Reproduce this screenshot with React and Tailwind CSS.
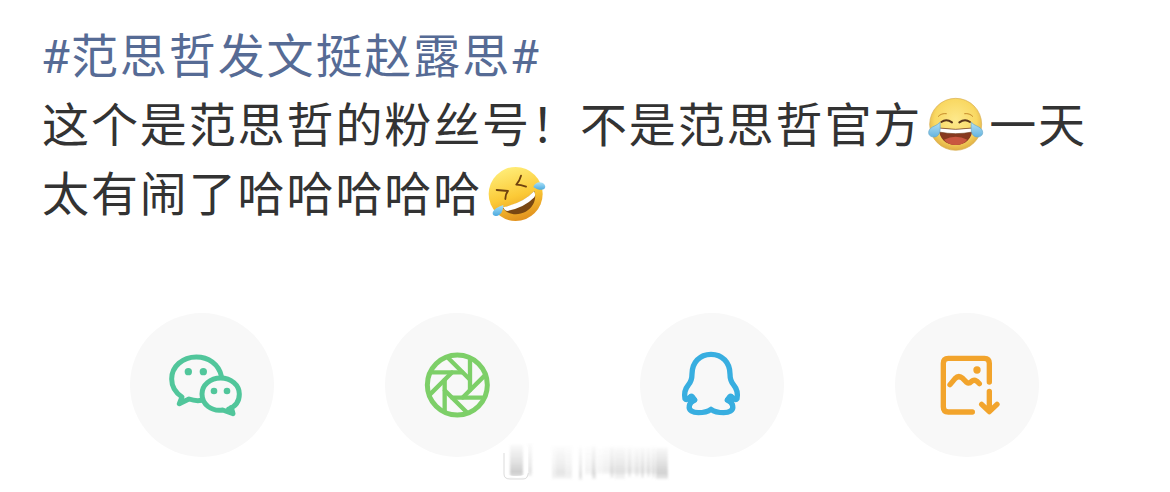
const JoyEmoji = () => (
  <svg viewBox="24 18 168 168" className="ml-[6px] mr-[5px] -mt-[2px] h-14 w-14 shrink-0" role="img">
    <defs>
      <radialGradient id="joyFace" cx="50%" cy="42%" r="58%">
        <stop offset="0" stopColor="#fde98c" />
        <stop offset="0.7" stopColor="#f9d862" />
        <stop offset="1" stopColor="#dfad43" />
      </radialGradient>
      <linearGradient id="joyTear" x1="0" y1="0" x2="0" y2="1">
        <stop offset="0" stopColor="#b4e0f3" />
        <stop offset="1" stopColor="#65b4df" />
      </linearGradient>
    </defs>
    <circle cx="107" cy="100" r="78" fill="url(#joyFace)" stroke="#d8ae50" strokeWidth="2" />
    <path d="M55 76Q64 66 79 68M134 68Q149 66 158 76" fill="none" stroke="#c58a2a" strokeWidth="3" strokeLinecap="round" />
    <path d="M64 93Q79 82 96 94M118 94Q135 82 150 93" fill="none" stroke="#5b371c" strokeWidth="6" strokeLinecap="round" />
    <path d="M57 111Q107 118 157 111C158 143 136 162 107 162S56 143 57 111Z" fill="#87391f" />
    <path d="M72 146Q107 128 142 146Q130 162 107 162T72 146Z" fill="#c95740" />
    <path d="M57 111Q107 119 157 111V123Q107 133 57 123Z" fill="#fff" stroke="#70401f" strokeWidth="2" />
    <path d="M60 94C61 112 63 136 43 138C25 139 21 122 32 112C39 105 51 104 60 94Z" fill="url(#joyTear)" stroke="#67a8c9" strokeWidth="2" />
    <path d="M154 94C153 112 151 136 171 138C189 139 193 122 182 112C175 105 163 104 154 94Z" fill="url(#joyTear)" stroke="#67a8c9" strokeWidth="2" />
  </svg>
);

const RoflEmoji = () => (
  <svg viewBox="24 18 174 174" className="ml-[6px] h-[58px] w-[58px] shrink-0" role="img">
    <defs>
      <linearGradient id="roflFace" x1="0.3" y1="0" x2="0.6" y2="1">
        <stop offset="0" stopColor="#ffee7a" />
        <stop offset="0.55" stopColor="#fbc936" />
        <stop offset="1" stopColor="#e08f1d" />
      </linearGradient>
      <linearGradient id="roflTear" x1="0" y1="0" x2="0" y2="1">
        <stop offset="0" stopColor="#a9e1f8" />
        <stop offset="1" stopColor="#4ba9df" />
      </linearGradient>
    </defs>
    <circle cx="107" cy="102" r="81" fill="url(#roflFace)" />
    <path d="M50 90L84 93Q77 101 76 117M123 47Q119 62 109 74Q122 74 138 80" fill="none" stroke="#70420f" strokeWidth="5.5" strokeLinejoin="round" strokeLinecap="round" />
    <path d="M68 143Q130 130 163 93C171 117 160 143 137 155C112 168 82 164 68 143Z" fill="#794713" />
    <path d="M69 142Q130 129 162 94Q168 104 163 112Q132 144 81 153Q73 151 69 142Z" fill="#fff" />
    <path d="M70 135C70 153 61 169 47 168C30 166 36 145 70 135Z" fill="url(#roflTear)" />
    <path d="M160 81C166 65 184 63 194 74C202 90 181 96 160 81Z" fill="url(#roflTear)" />
  </svg>
);

const WechatIcon = () => (
  <g stroke="#51c69b" strokeWidth="15">
    <path d="M289 213C281 177 250 156 214 156C173 156 140 184 140 222C140 246 153 264 171 276L163 296L192 282Q211 289 230 286" />
    <path d="M311 312C333 304 343 286 343 267C343 240 318 219 287 219S231 240 231 267C231 299 260 320 293 315L324 326L319 307" />
    <g fill="#51c69b" stroke="none">
      <circle cx="190" cy="200" r="11" />
      <circle cx="235" cy="200" r="11" />
      <circle cx="267" cy="258" r="10" />
      <circle cx="306" cy="258" r="10" />
    </g>
  </g>
);

const blades = [0, 45, 90, 135, 180, 225, 270, 315];

const MomentsIcon = () => (
  <g stroke="#7dcf68" strokeWidth="15">
    <circle cx="232" cy="240" r="90" />
    {blades.map((angle) => (
      <path key={angle} d="M152 202H247" strokeWidth="13" transform={`rotate(${angle} 232 240)`} />
    ))}
  </g>
);

const QQIcon = () => (
  <g stroke="#38aee0" strokeWidth="16">
    <path d="M228 148C194 148 171 173 171 207C171 223 168 231 160 240C150 252 147 266 150 281Q155 288 167 275L179 285Q165 291 163 302C160 317 174 323 190 323C207 323 217 321 228 313C239 321 249 323 266 323C282 323 296 317 293 302Q291 291 277 285L289 275Q301 288 306 281C309 266 306 252 296 240C288 231 285 223 285 207C285 173 262 148 228 148Z" />
    <path d="M170 276L176 284M286 276L280 284" strokeWidth="20" />
  </g>
);

const SaveImageIcon = () => (
  <g stroke="#f2a42c" strokeWidth="16">
    <path d="M298 231V175Q298 160 283 160H175Q160 160 160 175V306Q160 321 175 321H247" />
    <path d="M180 239L195 221Q206 209 218 220L230 232Q237 237 245 229Q255 220 268 236" />
    <circle cx="261" cy="195" r="11" fill="#f2a42c" stroke="none" />
    <path d="M298 259V318M275 298L298 320L321 298" />
    <path d="M289 309H307L298 319Z" strokeWidth="6" fill="#f2a42c" />
  </g>
);

const shareTargets = [
  { id: 'wechat', Icon: WechatIcon },
  { id: 'moments', Icon: MomentsIcon },
  { id: 'qq', Icon: QQIcon },
  { id: 'save', Icon: SaveImageIcon },
];

// [x, width, top, height, opacity]
const streaks = [
  [20, 13, 2, 32, 0.65], [38, 4, 0, 33, 0.35],
  [62, 20, 3, 33, 0.22], [66, 9, 4, 30, 0.15], [89, 3, 4, 33, 0.4],
  [95, 9, 4, 28, 0.16], [102, 4, 3, 33, 0.42], [107, 6, 5, 26, 0.15],
  [113, 64, 4, 27, 0.22], [120, 4, 3, 32, 0.3], [125, 10, 4, 32, 0.25],
  [138, 3, 4, 30, 0.3], [145, 4, 5, 29, 0.2], [151, 3, 5, 30, 0.35],
  [157, 3, 5, 29, 0.3], [162, 3, 4, 31, 0.3], [166, 12, 5, 31, 0.5],
];

const Watermark = () => (
  <svg viewBox="0 0 190 45" className="absolute left-[490px] top-[443px] h-[45px] w-[190px]">
    <defs>
      <linearGradient id="streak" x1="0" y1="0" x2="0" y2="1">
        <stop offset="0" stopColor="#aaa" stopOpacity="0.1" />
        <stop offset="0.5" stopColor="#aaa" stopOpacity="0.5" />
        <stop offset="0.85" stopColor="#999" stopOpacity="0.75" />
        <stop offset="1" stopColor="#999" stopOpacity="0.4" />
      </linearGradient>
      <filter id="soften">
        <feGaussianBlur stdDeviation="0.9" />
      </filter>
    </defs>
    <rect x="10" y="0" width="168" height="38" fill="#fff" filter="url(#soften)" />
    <g filter="url(#soften)" fill="url(#streak)">
      {streaks.map(([x, width, y, height, opacity]) => (
        <rect key={x} x={x} y={y} width={width} height={height} opacity={opacity} />
      ))}
    </g>
    <path d="M14 10V31Q14 36 20 36H33Q38 36 38 30" fill="none" stroke="#888" strokeWidth="1" opacity="0.3" />
    <path d="M16 12V31Q17 34 27 34T37 29V4" fill="none" stroke="#fff" strokeWidth="2" />
  </svg>
);

export default function App() {
  return (
    <main
      lang="zh-CN"
      className="relative h-[492px] w-[1170px] overflow-hidden bg-white pt-[22px] font-['Noto_Sans_CJK_SC',sans-serif]"
    >
      {/* Post text */}
      <div className="pl-[42px] text-[47px] leading-[61px] tracking-[1.9px] whitespace-nowrap text-[#333]">
        <p className="flex h-[69px] text-[#566b95]">
          <span className="-ml-[1px] pt-1 font-[Roboto] tracking-normal">#</span>
          <span className="ml-[1px]">范思哲发文挺赵露思</span>
          <span className="-ml-[1px] pt-1 font-[Roboto] tracking-normal">#</span>
        </p>
        <p className="flex h-[69px]">
          <span>这个是范思哲的粉丝号！不是范思哲官方</span>
          <span className="flex h-[69px] items-center"><JoyEmoji /></span>
          <span>一天</span>
        </p>
        <p className="flex h-[69px]">
          <span>太有闹了哈哈哈哈哈</span>
          <span className="flex h-[69px] items-center"><RoflEmoji /></span>
        </p>
      </div>

      {/* Share row */}
      <div className="mt-[84px] flex gap-[111px] pl-[130px]">
        {shareTargets.map(({ id, Icon }) => (
          <button key={id} className="h-36 w-36 shrink-0 rounded-full bg-[#f8f8f8]">
            <svg viewBox="15 24 432 432" fill="none" strokeLinecap="round" strokeLinejoin="round" className="h-36 w-36">
              <Icon />
            </svg>
          </button>
        ))}
      </div>

      <Watermark />
    </main>
  );
}
